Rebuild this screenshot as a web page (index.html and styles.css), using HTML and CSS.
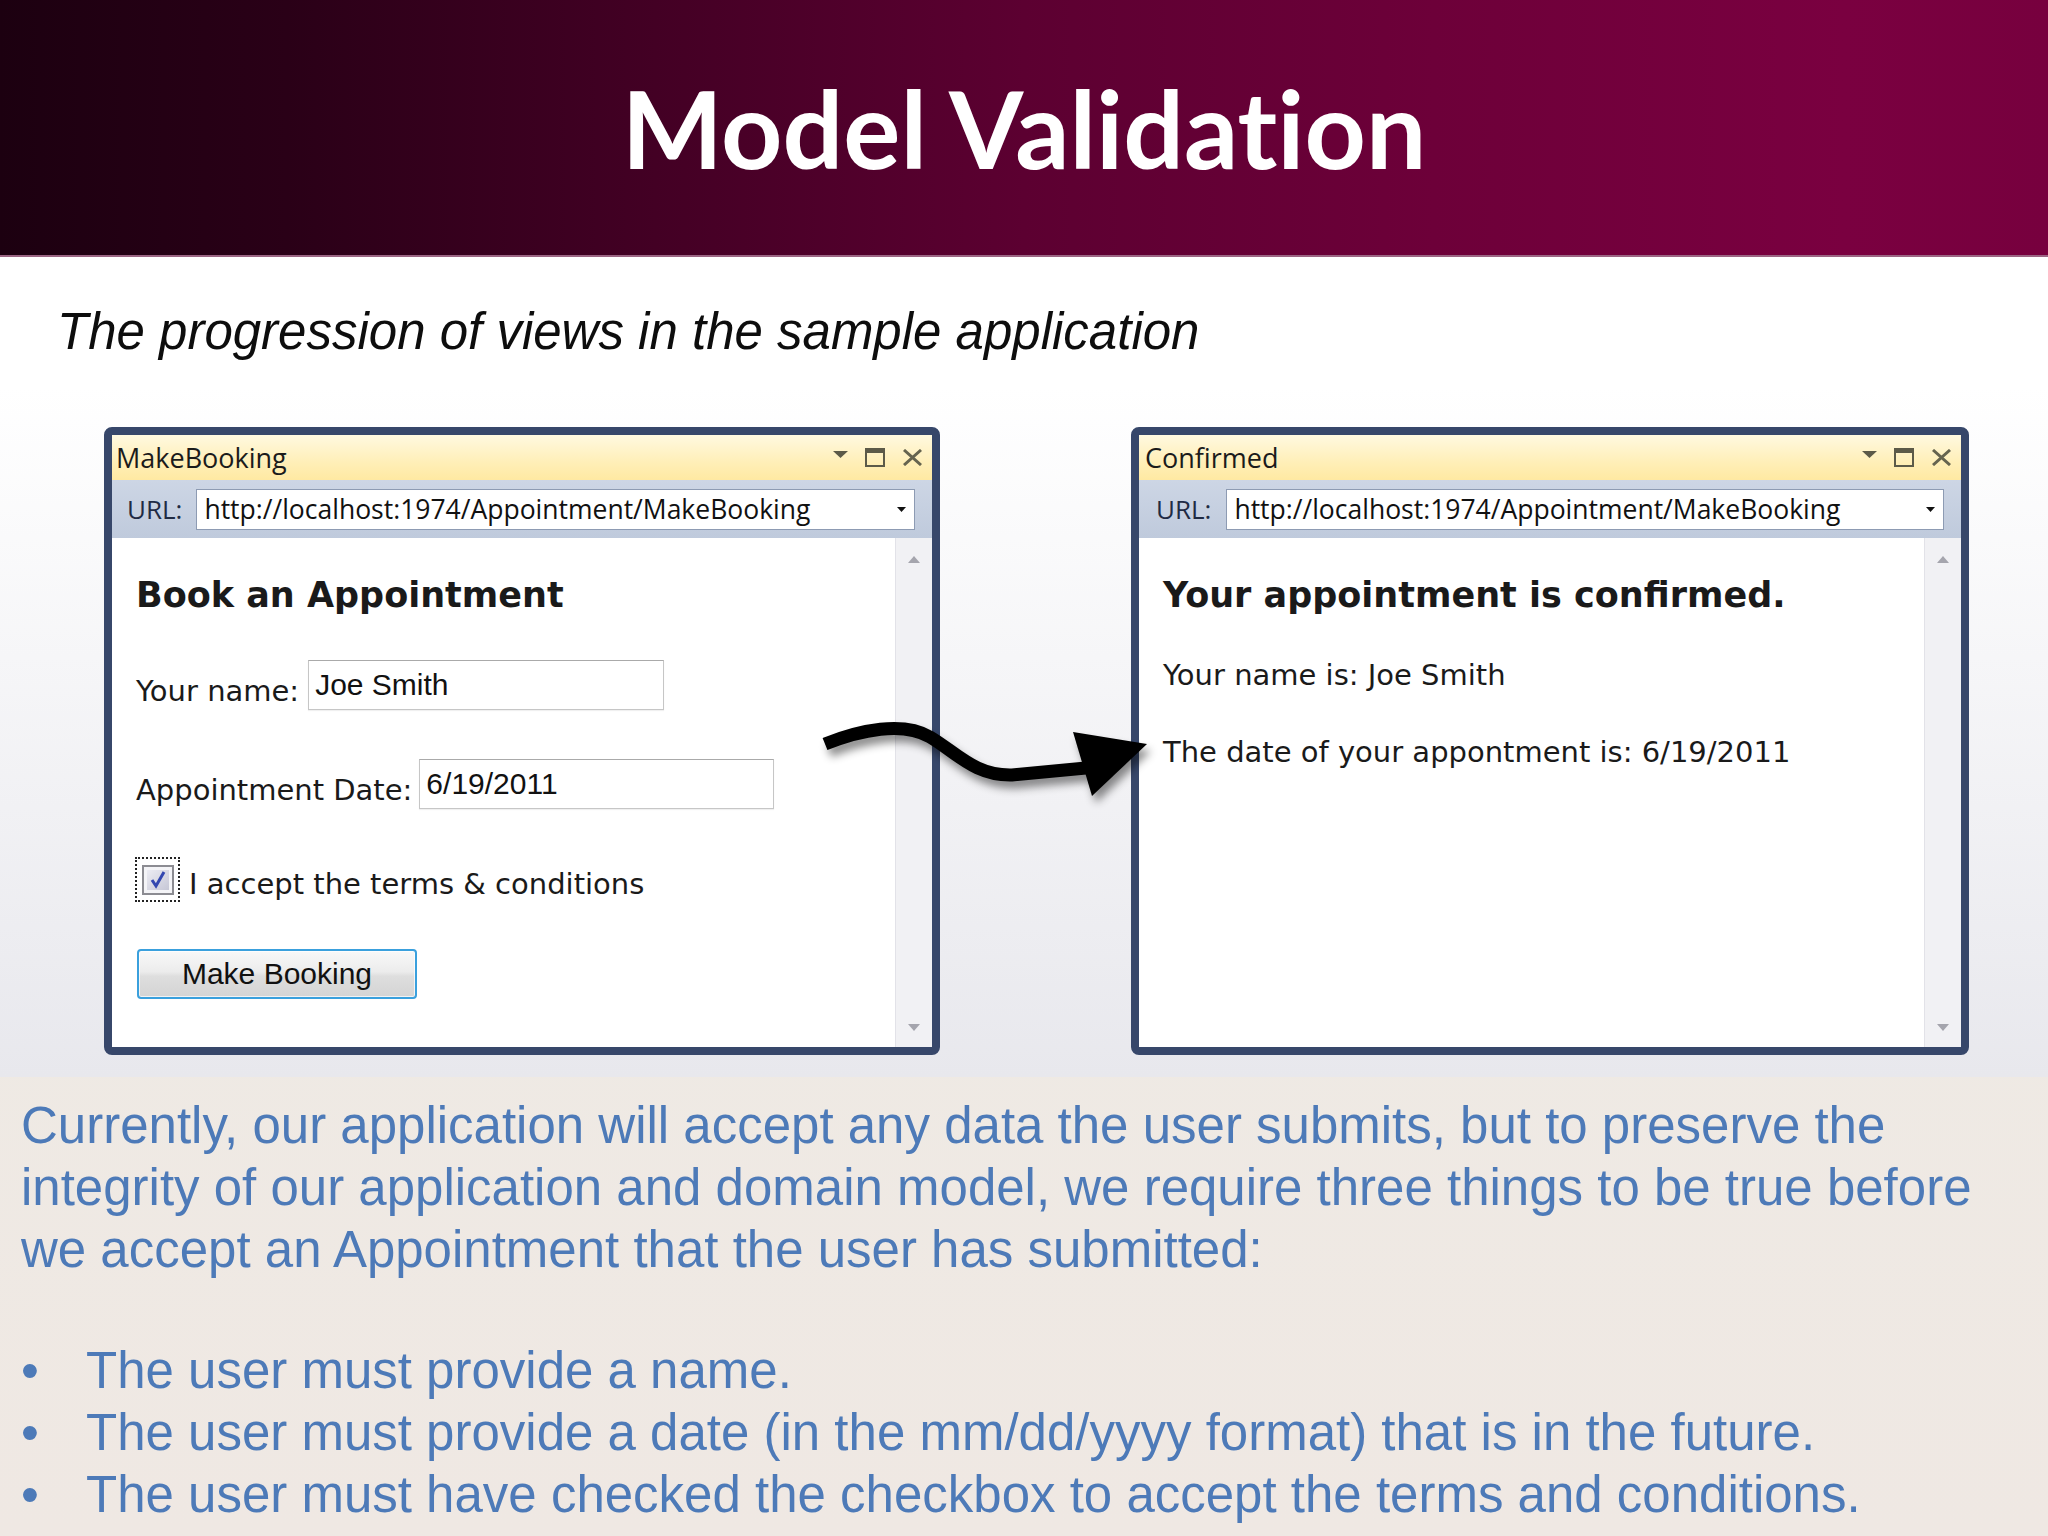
FILE: index.html
```html
<!DOCTYPE html>
<html lang="en">
<head>
<meta charset="utf-8">
<title>Model Validation</title>
<link rel="stylesheet" href="styles.css">
</head>
<body>
<header class="banner">
  <h1 class="banner-title">Model Validation</h1>
</header>

<section class="intro">
  <p class="subtitle">The progression of views in the sample application</p>

  <div class="shots">
    <div class="win win-left">
      <div class="win-titlebar">
        <span class="win-title">MakeBooking</span>
        <span class="win-controls">
          <svg class="ctl-drop" width="15" height="7" viewBox="0 0 15 7"><polygon points="0,0 15,0 7.5,7" fill="#5c5a48"/></svg>
          <svg class="ctl-max" width="20" height="19" viewBox="0 0 20 19"><rect x="1" y="1" width="18" height="17" fill="none" stroke="#5c5a48" stroke-width="2"/><rect x="0" y="0" width="20" height="5" fill="#5c5a48"/></svg>
          <svg class="ctl-close" width="21" height="17" viewBox="0 0 21 17"><path d="M2 1 L19 16 M19 1 L2 16" stroke="#66644f" stroke-width="3"/></svg>
        </span>
      </div>
      <div class="win-urlbar">
        <span class="url-label">URL:</span>
        <div class="url-box">
          <span class="url-text">http://localhost:1974/Appointment/MakeBooking</span>
          <svg width="9" height="5" viewBox="0 0 9 5"><polygon points="0,0 9,0 4.5,5" fill="#111"/></svg>
        </div>
      </div>
      <div class="win-body">
        <div class="page">
          <h2 class="page-heading">Book an Appointment</h2>
          <div class="form-row row-name">
            <span class="form-label">Your name:</span>
            <span class="field field-name">Joe Smith</span>
          </div>
          <div class="form-row row-date">
            <span class="form-label">Appointment Date:</span>
            <span class="field field-date">6/19/2011</span>
          </div>
          <div class="form-row row-check">
            <span class="check-focus">
              <svg width="32" height="30" viewBox="0 0 32 30"><defs><linearGradient id="cbFill" x1="0" y1="0" x2="1" y2="1"><stop offset="0" stop-color="#ececf3"/><stop offset="1" stop-color="#c6c7d6"/></linearGradient></defs><rect x="1" y="1" width="30" height="28" fill="#f4f4f7" stroke="#8c8c92" stroke-width="2"/><rect x="5" y="5" width="22" height="20" fill="url(#cbFill)"/><path d="M10 15 L14 21 L22 7" fill="none" stroke="#3347b0" stroke-width="3"/></svg>
            </span>
            <span class="form-label check-label">I accept the terms &amp; conditions</span>
          </div>
          <div class="form-row row-button">
            <span class="button">Make Booking</span>
          </div>
        </div>
        <div class="scrollbar">
          <svg width="12" height="7" viewBox="0 0 12 7"><polygon points="6,0 12,7 0,7" fill="#a5a5ad"/></svg>
          <svg width="12" height="7" viewBox="0 0 12 7"><polygon points="0,0 12,0 6,7" fill="#a5a5ad"/></svg>
        </div>
      </div>
    </div>

    <div class="win win-right">
      <div class="win-titlebar">
        <span class="win-title win-title-right">Confirmed</span>
        <span class="win-controls">
          <svg class="ctl-drop" width="15" height="7" viewBox="0 0 15 7"><polygon points="0,0 15,0 7.5,7" fill="#5c5a48"/></svg>
          <svg class="ctl-max" width="20" height="19" viewBox="0 0 20 19"><rect x="1" y="1" width="18" height="17" fill="none" stroke="#5c5a48" stroke-width="2"/><rect x="0" y="0" width="20" height="5" fill="#5c5a48"/></svg>
          <svg class="ctl-close" width="21" height="17" viewBox="0 0 21 17"><path d="M2 1 L19 16 M19 1 L2 16" stroke="#66644f" stroke-width="3"/></svg>
        </span>
      </div>
      <div class="win-urlbar url-right">
        <span class="url-label">URL:</span>
        <div class="url-box">
          <span class="url-text">http://localhost:1974/Appointment/MakeBooking</span>
          <svg width="9" height="5" viewBox="0 0 9 5"><polygon points="0,0 9,0 4.5,5" fill="#111"/></svg>
        </div>
      </div>
      <div class="win-body">
        <div class="page">
          <h2 class="page-heading">Your appointment is confirmed.</h2>
          <p class="confirm-line confirm-name">Your name is: Joe Smith</p>
          <p class="confirm-line confirm-date">The date of your appontment is: 6/19/2011</p>
        </div>
        <div class="scrollbar">
          <svg width="12" height="7" viewBox="0 0 12 7"><polygon points="6,0 12,7 0,7" fill="#a5a5ad"/></svg>
          <svg width="12" height="7" viewBox="0 0 12 7"><polygon points="0,0 12,0 6,7" fill="#a5a5ad"/></svg>
        </div>
      </div>
    </div>
  </div>

  <svg class="flow-arrow" width="380" height="130" viewBox="800 690 380 130">
    <defs>
      <filter id="arrowShadow" x="-20%" y="-30%" width="140%" height="180%">
        <feDropShadow dx="4" dy="7" stdDeviation="4" flood-color="#000" flood-opacity="0.45"/>
      </filter>
    </defs>
    <g filter="url(#arrowShadow)">
      <path d="M825 744 C860 730 903 721 930 737 C957 753 975 776 1012 775 L1086 768" fill="none" stroke="#000" stroke-width="13"/>
      <polygon points="1073,732 1147,744 1092,796" fill="#000"/>
    </g>
  </svg>
</section>

<section class="notes">
  <p class="notes-text">Currently, our application will accept any data the user submits, but to preserve the<br>integrity of our application and domain model, we require three things to be true before<br>we accept an Appointment that the user has submitted:</p>
  <ul class="notes-list">
    <li>The user must provide a name.</li>
    <li>The user must provide a date (in the mm/dd/yyyy format) that is in the future.</li>
    <li>The user must have checked the checkbox to accept the terms and conditions.</li>
  </ul>
</section>
</body>
</html>
```

FILE: styles.css
```css
html, body {
  margin: 0;
  padding: 0;
}

body {
  width: 2048px;
  height: 1536px;
  overflow: hidden;
  font-family: "Liberation Sans", Arial, sans-serif;
  background: linear-gradient(to bottom, #eeede6 0%, #efe8e3 100%);
}

/* ---------- Banner ---------- */
.banner {
  height: 255px;
  border-bottom: 2px solid #9b6583;
  background: linear-gradient(to right,
    #1c0010 0%,
    #2a0017 14%,
    #430024 32%,
    #5c0031 50%,
    #6d0039 70%,
    #7a0040 90%,
    #77003e 100%);
  display: flex;
  align-items: center;
  justify-content: center;
}

.banner-title {
  margin: 0;
  font-family: Lato, "Open Sans", sans-serif;
  font-weight: 700;
  font-size: 107px;
  line-height: 1;
  color: #ffffff;
  font-variant-ligatures: none;
}

/* ---------- Intro with screenshots ---------- */
.intro {
  position: relative;
  padding-bottom: 22px;
  background: linear-gradient(to bottom, #ffffff 0px, #ffffff 130px, #e8e8ed 100%);
}

.subtitle {
  margin: 0;
  padding: 46px 0 0 57px;
  font-family: "Liberation Sans", Arial, sans-serif;
  font-style: italic;
  font-size: 51px;
  line-height: 58px;
  color: #0d0d0d;
}

.shots {
  display: flex;
  gap: 191px;
  padding-left: 104px;
  margin-top: 66px;
}

.win {
  box-sizing: border-box;
  height: 628px;
  border: 8px solid #37476a;
  border-radius: 8px;
  overflow: hidden;
  display: flex;
  flex-direction: column;
  background: #ffffff;
}

.win-left { width: 836px; }
.win-right { width: 838px; }

.win-titlebar {
  height: 45px;
  flex: none;
  display: flex;
  align-items: center;
  justify-content: space-between;
  padding: 0 9px 0 4px;
  background: linear-gradient(to bottom, #fff9e0 0%, #ffefb8 60%, #ffe9a2 100%);
}

.win-title {
  font-family: "Open Sans", "Noto Sans", sans-serif;
  font-size: 27px;
  line-height: 45px;
  color: #1b1b1b;
}

.win-title-right { padding-left: 2px; }

.win-controls {
  display: flex;
  align-items: center;
  gap: 17px;
}

.win-controls svg { display: block; }
.ctl-drop { margin-bottom: 6px; }

.win-urlbar {
  height: 58px;
  flex: none;
  box-sizing: border-box;
  display: flex;
  align-items: center;
  gap: 14px;
  padding: 0 17px 0 15px;
  background: linear-gradient(to bottom, #cdd6e5 0%, #bfcadc 100%);
}

.url-right { padding-left: 17px; gap: 15px; }

.url-label {
  font-family: "Open Sans", "Noto Sans", sans-serif;
  font-size: 26px;
  color: #1f2b44;
}

.url-box {
  flex: 1;
  box-sizing: border-box;
  height: 41px;
  display: flex;
  align-items: center;
  justify-content: space-between;
  padding: 0 8px 0 7px;
  background: #ffffff;
  border: 1px solid #8d9bb3;
}

.url-box svg { display: block; }

.url-text {
  font-family: "Open Sans", "Noto Sans", sans-serif;
  font-size: 26.5px;
  line-height: 39px;
  color: #111111;
}

.win-body {
  flex: 1;
  display: flex;
  min-height: 0;
}

.page {
  flex: 1;
  padding: 36px 0 0 24px;
}

.scrollbar {
  width: 37px;
  flex: none;
  box-sizing: border-box;
  display: flex;
  flex-direction: column;
  justify-content: space-between;
  align-items: center;
  padding: 18px 0 16px;
  background: #f1f1f4;
  border-left: 1px solid #e2e2e8;
}

.scrollbar svg { display: block; }

.page-heading {
  margin: 0;
  font-family: "DejaVu Sans", Verdana, sans-serif;
  font-weight: bold;
  font-size: 35px;
  line-height: 42px;
  color: #1a1a1a;
}

.form-row {
  display: flex;
  align-items: flex-end;
}

.form-label {
  font-family: "DejaVu Sans", Verdana, sans-serif;
  font-size: 29px;
  line-height: 34px;
  padding-bottom: 2px;
  color: #1a1a1a;
  white-space: nowrap;
}

.row-name { margin-top: 44px; gap: 9px; }
.row-date { margin-top: 49px; gap: 7px; }
.row-check { margin-top: 48px; gap: 9px; }
.row-button { margin-top: 47px; }

.field {
  box-sizing: border-box;
  height: 50px;
  padding-left: 6px;
  font-family: "Liberation Sans", Arial, sans-serif;
  font-size: 30px;
  line-height: 48px;
  color: #111111;
  background: #ffffff;
  border: 1px solid #c6c6c6;
  border-top-color: #aaaaaa;
  box-shadow: 0 1px 1px rgba(0, 0, 0, 0.06);
}

.field-name { width: 356px; }
.field-date { width: 355px; }

.check-focus {
  box-sizing: border-box;
  width: 45px;
  height: 45px;
  margin-left: -1px;
  display: flex;
  align-items: center;
  justify-content: center;
  border: 2px dotted #222222;
}

.check-focus svg { display: block; }

.check-label { padding-bottom: 1px; }

.button {
  box-sizing: border-box;
  width: 280px;
  height: 50px;
  margin-left: 1px;
  border: 2px solid #3aa0dd;
  border-radius: 4px;
  background: linear-gradient(to bottom, #f8f8f8 0%, #ececec 45%, #dedede 55%, #d4d4d4 100%);
  box-shadow: inset 0 0 0 1px rgba(255, 255, 255, 0.7);
  font-family: "Liberation Sans", Arial, sans-serif;
  font-size: 30px;
  line-height: 46px;
  text-align: center;
  color: #111111;
}

.confirm-line {
  margin: 0;
  font-family: "DejaVu Sans", Verdana, sans-serif;
  font-size: 29px;
  line-height: 34px;
  color: #1a1a1a;
}

.confirm-name { margin-top: 42px; }
.confirm-date { margin-top: 43px; }

.flow-arrow {
  position: absolute;
  left: 800px;
  top: 433px;
  overflow: visible;
}

/* ---------- Notes ---------- */
.notes {
  padding: 18px 0 0 21px;
  font-family: "Liberation Sans", Arial, sans-serif;
  font-size: 51px;
  line-height: 62px;
  color: #4d7ab8;
}

.notes-text {
  margin: 0 0 59px;
  white-space: nowrap;
}

.notes-list {
  margin: 0;
  padding: 0;
  list-style: none;
}

.notes-list li::before {
  content: "\2022";
  display: inline-block;
  width: 65px;
}
```
